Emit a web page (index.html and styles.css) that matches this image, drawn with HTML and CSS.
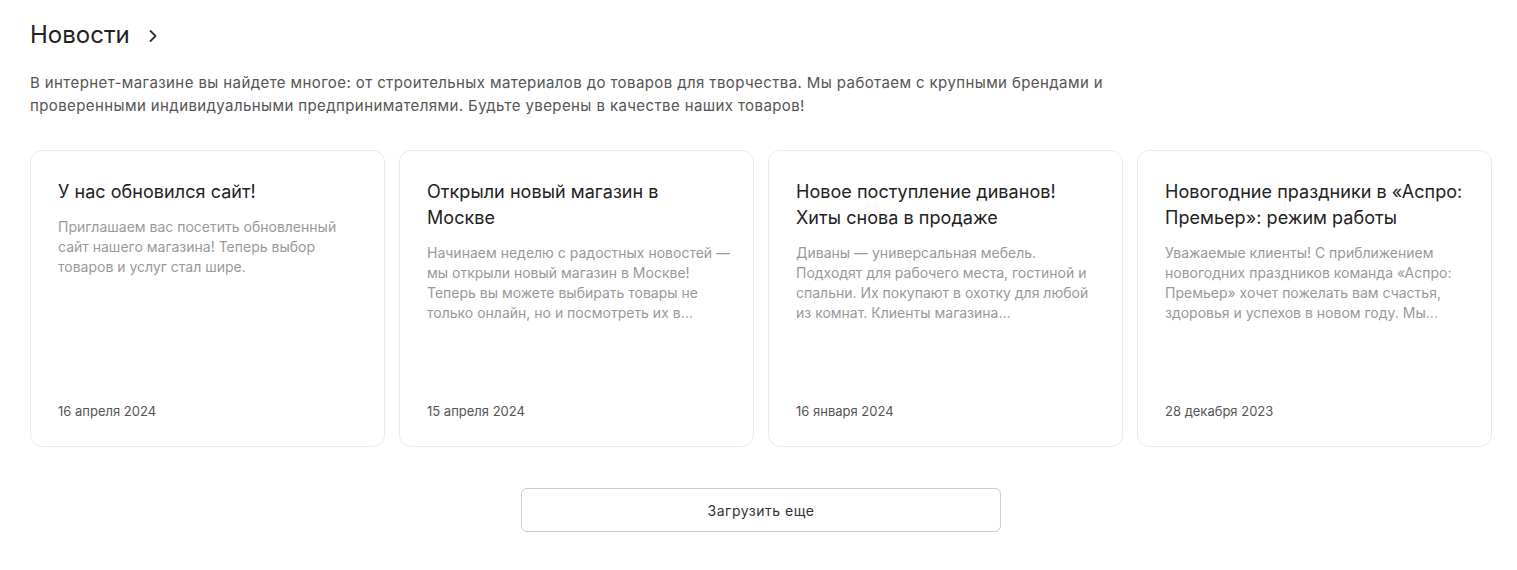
FILE: index.html
```html
<!DOCTYPE html>
<html lang="ru">
<head>
<meta charset="utf-8">
<link rel="stylesheet" href="styles.css">
</head>
<body>
<section class="news">
  <h2 class="news-title">Новости
    <svg class="chev" width="10" height="14" viewBox="0 0 10 14"><path d="M2.5 2 L7.5 7 L2.5 12" fill="none" stroke="#333" stroke-width="1.8" stroke-linecap="round" stroke-linejoin="round"/></svg>
  </h2>
  <p class="news-intro">В интернет-магазине вы найдете многое: от строительных материалов до товаров для творчества. Мы работаем с крупными брендами и проверенными индивидуальными предпринимателями. Будьте уверены в качестве наших товаров!</p>
  <div class="cards">
    <article class="card">
      <h3 class="card-title">У нас обновился сайт!</h3>
      <p class="card-text">Приглашаем вас посетить обновленный сайт нашего магазина! Теперь выбор товаров и услуг стал шире.</p>
      <div class="card-date">16 апреля 2024</div>
    </article>
    <article class="card">
      <h3 class="card-title">Открыли новый магазин в Москве</h3>
      <p class="card-text">Начинаем неделю с радостных новостей — мы открыли новый магазин в Москве! Теперь вы можете выбирать товары не только онлайн, но и посмотреть их в…</p>
      <div class="card-date">15 апреля 2024</div>
    </article>
    <article class="card">
      <h3 class="card-title">Новое поступление диванов! Хиты снова в продаже</h3>
      <p class="card-text">Диваны — универсальная мебель. Подходят для рабочего места, гостиной и спальни. Их покупают в охотку для любой из комнат. Клиенты магазина…</p>
      <div class="card-date">16 января 2024</div>
    </article>
    <article class="card">
      <h3 class="card-title">Новогодние праздники в «Аспро: Премьер»: режим работы</h3>
      <p class="card-text">Уважаемые клиенты! С приближением новогодних праздников команда «Аспро: Премьер» хочет пожелать вам счастья, здоровья и успехов в новом году. Мы…</p>
      <div class="card-date">28 декабря 2023</div>
    </article>
  </div>
  <div class="more-wrap">
    <button class="more">Загрузить еще</button>
  </div>
</section>
</body>
</html>
```
FILE: styles.css
```css
* { box-sizing: border-box; }
body {
  margin: 0;
  background: #fff;
  font-family: Inter, "Noto Sans", "Liberation Sans", sans-serif;
  color: #333;
}
.news {
  padding: 20px 25px 0 30px;
}
.news-title {
  margin: 0;
  font-size: 24px;
  font-weight: 400;
  line-height: 30px;
  color: #222;
  display: flex;
  align-items: center;
  gap: 18px;
}
.chev { margin-top: 1px; }
.news-intro {
  margin: 21px 0 0;
  max-width: 1115px;
  font-size: 15px;
  letter-spacing: 0.4px;
  line-height: 23px;
  color: #555;
}
.cards {
  margin-top: 33px;
  display: grid;
  grid-template-columns: repeat(4, 1fr);
  gap: 14px;
}
.card {
  height: 297px;
  border: 1px solid #ebebeb;
  border-radius: 12px;
  padding: 28px 22px 26px 27px;
  display: flex;
  flex-direction: column;
}
.card-title {
  margin: 0;
  padding-right: 2px;
  font-size: 18px;
  letter-spacing: 0.05px;
  font-weight: 400;
  line-height: 26px;
  color: #222;
}
.card-text {
  margin: 12px 0 0;
  font-size: 14px;
  line-height: 20px;
  color: #999;
}
.card-date {
  margin-top: auto;
  font-size: 13px;
  line-height: 18px;
  color: #555;
}
.more-wrap {
  display: flex;
  justify-content: center;
  margin-top: 41px;
}
.more {
  width: 480px;
  height: 44px;
  border: 1px solid #ccc;
  border-radius: 6px;
  background: #fff;
  font-family: inherit;
  font-size: 14px;
  letter-spacing: 0.5px;
  color: #333;
  cursor: pointer;
}
```
